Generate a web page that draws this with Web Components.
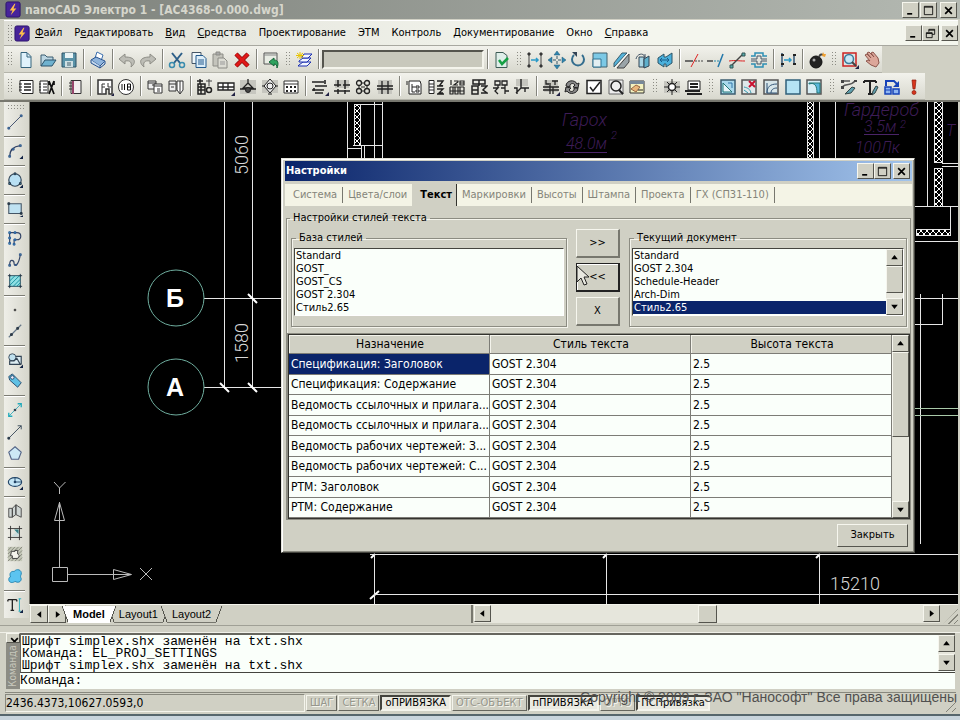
<!DOCTYPE html>
<html lang="ru">
<head>
<meta charset="utf-8">
<title>nanoCAD Электро 1 - [АС4368-0.000.dwg]</title>
<style>
html,body{height:100%}
body{margin:0;overflow:hidden;background:#d0d0c4;color:#000;font:11px/14px "DejaVu Sans Condensed","Liberation Sans",sans-serif}
</style>
</head>
<body>
<cad-app></cad-app>
<script>
const ICONS = {
bolt:'<rect x="1" y="1" width="15" height="16" rx="2" fill="#47239a" stroke="#2a146a"/><path d="M10 3L5 10h3L6 15l6-7H9l2-5z" fill="#ffc04a" stroke="none"/>',
new:'<path d="M4 1.500h6l4 4v11H4z" fill="#dff2fb" stroke="#35647c"/><path d="M10 2v4h4" stroke="#35647c"/>',
open:'<path d="M2 15V4h4l2 2h6v3" fill="#bcd6e2" stroke="#3b5c70"/><path d="M2 15l4-6h11l-4 6z" fill="#6fb2cf" stroke="#2c536a"/>',
save:'<path d="M2 2h14v14H2z" fill="#5a93a8" stroke="#2c5266"/><path d="M5 2h8v5H5z" fill="#e9f4f6" stroke="none"/><path d="M5 10h8v6H5z" fill="#cfe0e4" stroke="none"/><path d="M7 12h4M7 14h4" stroke="#44606c"/>',
print:'<path d="M6 7l2-6 6 3-2 6" fill="#fff" stroke="#3b6fae"/><path d="M2 9l5-3 9 4-5 5z" fill="#8fb4dc" stroke="#27528f"/><path d="M2 9v3l9 5v-2M11 17l5-4v-3" fill="#c4d8ee" stroke="#27528f"/>',
undo:'<path d="M7 3L1 8l6 5v-3c6-1 7 2 6 6 6-5 4-10-6-10z" fill="#bdbdb6" stroke="#8d8d86"/>',
redo:'<path d="M11 3l6 5-6 5v-3c-6-1-7 2-6 6-6-5-4-10 6-10z" fill="#bdbdb6" stroke="#8d8d86"/>',
cut:'<path d="M4 2l8 10M14 2L6 12" stroke="#2d5f88" stroke-width="2"/><circle cx="4" cy="14" r="2.500" stroke="#3a8cae" stroke-width="1.500"/><circle cx="14" cy="14" r="2.500" stroke="#3a8cae" stroke-width="1.500"/>',
copy:'<path d="M2 1.500h9v11H2z" fill="#eef6fa" stroke="#456"/><path d="M6 4.500h7l3 3v9H6z" fill="#dcedf8" stroke="#23598c"/><path d="M8 9h6M8 11h6M8 13h6" stroke="#23598c"/>',
paste:'<path d="M2 3h10v12H2z" fill="#c4c4bc" stroke="#8c8c86"/><path d="M5 1h4v3H5z" fill="#aaa" stroke="#8c8c86"/><path d="M7 7h6l3 3v7H7z" fill="#dcdcd4" stroke="#8c8c86"/><path d="M9 11h5M9 13h5" stroke="#999"/>',
del:'<path d="M3 3l12 12M15 3L3 15" stroke="#8c0d0d" stroke-width="4.500"/><path d="M3 3l12 12M15 3L3 15" stroke="#e01818" stroke-width="3"/>',
import:'<path d="M2 2h13v11H2z" fill="#e8ece4" stroke="#555"/><path d="M2 4h13" stroke="#888"/><path d="M7 11l5-4v2c4 0 5 3 3 8 0-3-1-4-3-4v2z" fill="#2fa35f" stroke="#17683a"/>',
layers:'<path d="M4 14l4-3h8l-4 4H3z" fill="#f2f6ff" stroke="#1b2fb0"/><path d="M4 10l4-3h8l-4 4H4z" fill="#f2f6ff" stroke="#1b2fb0"/><path d="M7 6l2-3h8l-4 4H7z" fill="#f2f6ff" stroke="#1b2fb0"/><path d="M5 1v7M1 4.500h8M2 2l6 5M8 2L2 7" stroke="#e8c400"/>',
pagecheck:'<path d="M3 1.500h7l4 3v12H3z" fill="#dfeee9" stroke="#3c5b55"/><path d="M6 9l3 4 6-6" stroke="#15a044" stroke-width="2.500"/>',
copyobj:'<path d="M3 2v14M15 2v14" stroke="#444"/><path d="M2 4h2v-2h-2zM2 14h2v2h-2zM14 4h2v-2h-2zM14 14h2v2h-2z" fill="#444" stroke="#333"/><path d="M5 9h7M10 7l2 2-2 2" stroke="#2a9ac8" stroke-width="1.500"/>',
move:'<path d="M9 0l3 4H6zM9 18l3-4H6zM0 9l4-3v6zM18 9l-4-3v6z" fill="#2f85ae" stroke="#225a78" stroke-width=".5"/><path d="M9 5v3M9 10v3M5 9h3M10 9h3" stroke="#356"/>',
rotate:'<path d="M13 4a6 6 0 1 1-8 0" stroke="#336d8e" stroke-width="2"/><path d="M3 1h5v5z" fill="#345" stroke="none"/>',
scale:'<path d="M2 2h14v14H2z" fill="#7cc9e6" stroke="#40606e"/><path d="M2 8h8v8H2z" fill="#e3eff2" stroke="#2d7596"/>',
mirror:'<path d="M1 12L9 2h5L1 16z" fill="#55b4db" stroke="#3a5c6c"/><path d="M4 17L16 3v8l-5 6z" fill="#9aa4a8" stroke="#444"/><path d="M2 17L15 2" stroke="#fff"/>',
stretch:'<path d="M2 8c1-5 7-7 9-2M11 3v4H7" stroke="#456"/><path d="M5 6h5v10H5z" fill="#a8d6e6" stroke="#345"/><path d="M10 8l5-3v10l-5 2z" fill="#5fb0cc" stroke="#345"/>',
flip:'<path d="M2 7l6-4v3h2l6-4v10l-6 4v-3H8v3l-6-4z" fill="#4ab0dc" stroke="#2e5566"/><path d="M4 9h9M6 7L4 9l2 2M11 7l2 2-2 2" stroke="#1b5d88"/>',
trim:'<path d="M0 10h8" stroke="#444" stroke-width="1.500"/><path d="M10 10h8" stroke="#444" stroke-dasharray="2 1"/><path d="M6 16L13 3" stroke="#d22"/>',
extend:'<path d="M0 10h6" stroke="#444" stroke-width="1.500"/><path d="M7 10h6" stroke="#28a" stroke-dasharray="2 1"/><path d="M11 16l5-13" stroke="#27a" stroke-width="1.500"/>',
chamfer:'<path d="M1 10c7-1 8 0 16 0" stroke="#d22"/><path d="M3 15L15 3" stroke="#444" stroke-width="1.500"/><path d="M2 14h3v3H2zM14 2h3v3h-3z" fill="#5aa" stroke="#355"/>',
offset:'<path d="M1 5h4V2h8v3h4M1 13h4v3h8v-3h4" stroke="#2c8fb4" stroke-width="1.500"/><path d="M1 8h6V5h4v3h6M1 10h6v3h4v-3h6" stroke="#456"/>',
join:'<path d="M3 2v14M15 3v11" stroke="#357" stroke-width="1.500"/><path d="M2 4h3M2 13h3M14 4h3M14 13h3" stroke="#222" stroke-width="2"/><path d="M5 9h7M10 7l2 2-2 2" stroke="#2a9ac8" stroke-width="1.500"/>',
bomb:'<circle cx="8" cy="11" r="6" fill="#222" stroke="#111"/><circle cx="6" cy="9" r="1.500" fill="#aaa" stroke="none"/><path d="M11 6c1-3 3-3 4-2" stroke="#444" stroke-width="2"/><path d="M15 1l1 2 2 0-1 3-3-1z" fill="#f0a030" stroke="none"/>',
zoomw:'<path d="M2 2h13v13H2z" fill="#dde4e4" stroke="#c22" stroke-width="1.500"/><circle cx="8" cy="8" r="4.500" fill="#c8e8f6" stroke="#3c7c9c" stroke-width="1.500"/><path d="M11 11l4 4" stroke="#444" stroke-width="2"/><path d="M18 14v4h-4z" fill="#224" stroke="none"/>',
hand:'<path d="M3 4l2-1 4 4-4-5 2-1 5 5-3-4 2-1 5 6 1 5-3 4-5-2-5-4 2-1 2 1z" fill="#dca79a" stroke="#8c554c"/>',
list:'<path d="M3 2.500h13v13H5l-2-2z" fill="#fff" stroke="#222"/><path d="M7 6h7M7 9h7M7 12h7" stroke="#222" stroke-width="1.500"/><path d="M2 6h3M2 9h3M2 12h3" stroke="#222"/>',
listx:'<path d="M2 3h8v12H2z" fill="#fff" stroke="#222"/><path d="M5 6h4M5 9h4M5 12h4M1 6h2M1 9h2M1 12h2" stroke="#222"/><path d="M11 3l5 13M16 3l-5 13M11 3v4M16 3v4" stroke="#111" stroke-width="1.700"/>',
door:'<path d="M4 2.500h10v13H4z" fill="#f2efef" stroke="#333"/><path d="M6 3v13" stroke="#96456b" stroke-width="2"/><path d="M2 5h3M2 8h3M2 11h3" stroke="#333"/>',
plan:'<path d="M2 2h14v14h-3v-5h-3v5H2z" fill="#fff" stroke="#333" stroke-width="1.500"/><path d="M6 15V6h3M6 9h3M12 5v4h3" stroke="#333"/><path d="M18 15v3h-3z" fill="#224" stroke="none"/>',
n118:'<circle cx="9" cy="9" r="7.500" fill="#fff" stroke="#333"/><path d="M5 6v6M7.500 6v6M10.500 6h3v6h-3zM10.500 9h3" stroke="#111"/>',
panels:'<path d="M2 3h8v8H2z" fill="#eee" stroke="#333"/><path d="M2 5h8M6 7h2" stroke="#333"/><path d="M8 6h8v9H8z" fill="#fff" stroke="#333"/><path d="M8 8h8M11 11h3M11 13h3" stroke="#333"/>',
panels2:'<path d="M2 3h7v10H2z" fill="#eee" stroke="#333"/><path d="M2 6h7M4 9h3" stroke="#333"/><path d="M10 3h6v9l-3 4-3-4zM13 3v12" fill="#fff" stroke="#333"/>',
dev1:'<path d="M2 6h7v10H2zM2 9h7M2 12h7M5 6v10M1 3h6M4 1v5" stroke="#222" stroke-width="1.500"/><path d="M10 3h6M13 1v7" stroke="#444"/><circle cx="13" cy="12" r="2.500" stroke="#222" stroke-width="1.500"/>',
dev2:'<path d="M1 5h16v7H1zM6 5v7M11 5v7M1 9h16" fill="#fff" stroke="#222" stroke-width="1.300"/><path d="M18 14v4h-4z" fill="#224" stroke="none"/>',
lamp:'<path d="M1 2h16v14H1z" fill="#c6c6bf" stroke="none"/><path d="M9 1v5M9 5l-5 5h10zM1 11h16" stroke="#222" stroke-width="1.300"/><circle cx="9" cy="12" r="2.500" fill="#444" stroke="#222"/>',
lamp2:'<path d="M1 2h16v13H1z" fill="#c6c6bf" stroke="none"/><path d="M9 1l6 7-6 7-6-7zM1 8h3M14 8h3" fill="#eee" stroke="#222"/><circle cx="9" cy="8" r="3" stroke="#222"/><path d="M7 16h4" stroke="#222"/>',
xxx:'<path d="M2 3h14v12H2zM2 6h14" fill="#fff" stroke="#333"/><path d="M4 8l2 2M6 8l-2 2M8 8l2 2M10 8l-2 2M12 8l2 2M14 8l-2 2M4 12l2 2M6 12l-2 2M8 12l2 2M10 12l-2 2M12 12l2 2M14 12l-2 2" stroke="#222"/>',
wires:'<path d="M1 4h12M4 8h12M1 12h12M4 15h8M14 2v4M3 10v3" stroke="#222" stroke-width="1.600"/><path d="M18 14v4h-4z" fill="#224" stroke="none"/>',
brk:'<path d="M2 2h14v8H2z" fill="#c6c6bf" stroke="none"/><path d="M5 2v7M12 2v9M1 7h7M10 7h7M1 13h16M5 11v5M12 12v4" stroke="#222" stroke-width="1.500"/>',
pts:'<g stroke="#222" stroke-width="1.300"><circle cx="5" cy="5" r="2.500"/><circle cx="13" cy="5" r="2.500"/><circle cx="5" cy="13" r="2.500"/><circle cx="13" cy="13" r="2.500"/><path d="M8 5h2M8 13h2M5 8v2M13 8v2M7 9h4" stroke-width="1"/></g>',
node:'<path d="M2 2h14v14H2z" fill="#c6c6bf" stroke="none"/><path d="M1 8h5V3M17 8h-5V3M6 16v-5H1M12 16v-5h5M6 8h6v3H6z" stroke="#222" stroke-width="1.300"/>',
tree:'<path d="M4 3h11l1 3v10H4z" fill="#fff" stroke="#222"/><path d="M7 6v8h3M7 9h3M2 3v4" stroke="#222"/><path d="M11 8h3v2h-3zM11 12h3v2h-3z" stroke="#222"/>',
sch1:'<path d="M2 2.500h5v13H2zM2 6h5M2 9h5M2 12h5" fill="#fff" stroke="#222"/><path d="M10 3h6l-3 4 3 1h-6M10 11h6l-4 4h4M10 16h7" stroke="#222" stroke-width="1.400"/>',
sch2:'<path d="M3 2v5M6 3h4v1L6 7h4M12 3h4v4h-4zM12 5h4M2 9h14M2 9v7h3V9M7 9v7h3V9M12 9v7h4V9M2 13h14" stroke="#222" stroke-width="1.200"/>',
sch3:'<path d="M3 2h12v4H3zM2 8h6v8H2zM2 12h6M9 2v6M11 8h6l-4 4 4 3h-6" stroke="#222" stroke-width="1.500"/>',
sch4:'<path d="M3 3h5v4H3zM10 3h5v4h-5zM1 10h5l-3 3 3 3M9 10h4v6M13 13h4M6 7v3M13 7v3" stroke="#222" stroke-width="1.300"/>',
sch5:'<path d="M3 1h12v7H3z" fill="#c6c6bf" stroke="none"/><path d="M8 1v9l-5 5M8 10h8M4 16v-6H1M12 10v4" stroke="#222" stroke-width="1.400"/>',
gnd:'<path d="M2 2h14v12H2z" fill="#c6c6bf" stroke="none"/><path d="M4 2v4h3M10 3h6M13 3v4M1 9h16M1 12h16M8 5v11M11 9v7" stroke="#222" stroke-width="1.300"/><path d="M18 14v4h-4z" fill="#224" stroke="none"/>',
sync:'<path d="M3 8c0-6 9-7 11-2l2-1-1 5-5-1 2-2c-2-3-6-1-5 2zM15 10c0 6-9 7-11 3l-2 1 1-5 5 1-2 2c2 3 6 1 5-2z" fill="#888" stroke="#222"/>',
chk:'<path d="M2 2.500h14v13H2z" fill="#fff" stroke="#222" stroke-width="1.500"/><path d="M5 9l3 4 7-9" stroke="#222" stroke-width="1.500"/>',
find:'<path d="M2 2h14v14H2z" fill="#eee" stroke="#666"/><circle cx="9" cy="8" r="5" stroke="#222" stroke-width="1.500"/><path d="M12 12l4 4" stroke="#222" stroke-width="2"/>',
note:'<path d="M2 3h14v12H2z" fill="#f4f2c0" stroke="#333"/><path d="M2 3h14v3H2z" fill="#789" stroke="none"/><path d="M3 11l5-4 4 2-4 5z" fill="#e8b77c" stroke="#964"/><path d="M10 12h5" stroke="#222"/>',
target:'<path d="M1 3h16v12H1z" fill="#c6c6bf" stroke="none"/><path d="M9 1v4M9 13v4M1 9h4M13 9h4M4 4l2 2M14 4l-2 2M4 14l2-2M14 14l-2-2" stroke="#222"/><circle cx="9" cy="9" r="3.500" fill="#fff" stroke="#222" stroke-width="1.500"/>',
board:'<path d="M4 3h12v9H4z" fill="#fff" stroke="#222"/><path d="M6 6h8M6 9h8M1 13h15M3 16h15" stroke="#222" stroke-width="1.800"/>',
v1:'<path d="M2 2h14v14H2z" fill="#a9d9ec" stroke="#3b5e70" stroke-width="1.500"/><path d="M4 5l9 9H4z" fill="#e8f6fb" stroke="#277"/><path d="M9 5h4v5" stroke="#37a"/>',
v2:'<path d="M2 2h14v14H2z" fill="#dfe8ea" stroke="#555" stroke-width="1.500"/><path d="M4 9c4 1 6 2 7 6M4 12l4 3" stroke="#39a"/><path d="M9 3l6 6M15 3L9 9" stroke="#c8102e" stroke-width="2"/>',
v3:'<path d="M2 2h14v14H2z" fill="#d7e6ea" stroke="#555" stroke-width="1.500"/><path d="M5 15c0-6 3-9 10-9M9 15c0-3 2-5 6-5M5 5v10h10" stroke="#357"/>',
v4:'<path d="M2 2h14v14H2z" fill="#b5e3f4" stroke="#30607a" stroke-width="1.500"/>',
v5:'<path d="M2 2h14v14H2z" fill="#d7eef6" stroke="#555" stroke-width="1.500"/><path d="M4 6c6-2 8 2 8 9h3V5H4z" fill="#5ab8dc" stroke="#277"/>',
d1:'<path d="M2 3h8M2 9c5-5 8 0 13-6" stroke="#555" stroke-width="1.500"/><path d="M1 2h3v3H1zM14 2h3v2h-3zM1 8h3v3H1z" fill="#444" stroke="none"/><path d="M12 9l3 1-4 5-6 1 4-4z" fill="#5f9fae" stroke="#344"/>',
d2:'<path d="M2 3h12M2 3v2M14 3v2M8 3v13M6 16h4" stroke="#222" stroke-width="2"/><path d="M14 8l2 1-3 6-3 2 1-4z" fill="#5f9fae" stroke="#344"/>',
d3:'<path d="M3 8V3h8l4 4" stroke="#1642b8" stroke-width="2"/><path d="M16 3v6h-6z" fill="#1642b8" stroke="none"/><path d="M2 9h6v7H2zM10 11h6v5h-6z" fill="#8fb5f2" stroke="#1642b8" stroke-width="1.500"/><path d="M2 12h6" stroke="#1642b8"/>',
ex:'<path d="M7 2h4l-1 9H8z" fill="#d8351c" stroke="#8c1a0c" stroke-width=".7"/><circle cx="9" cy="14.500" r="2" fill="#d8351c" stroke="#8c1a0c" stroke-width=".7"/>',
l_line:'<path d="M2 16L16 2" stroke="#346"/><path d="M1 15h2v2H1zM15 1h2v2h-2z" fill="#48a" stroke="#358"/>',
l_arc:'<path d="M3 15c0-7 4-11 12-12" stroke="#346" stroke-width="1.300"/><path d="M2 14h2v2H2zM6 6h2v2H6zM14 2h2v2h-2z" fill="#48a" stroke="#358"/><path d="M18 14v4h-4z" fill="#124" stroke="none"/>',
l_circ:'<circle cx="9" cy="9" r="7" fill="#b9e0f3" stroke="#345" stroke-width="1.300"/><path d="M8 1h2v2H8zM2 12h2v2H2zM14 12h2v2h-2z" fill="#48a" stroke="#234"/><path d="M18 14v4h-4z" fill="#124" stroke="none"/>',
l_rect:'<path d="M2 3h14v11H2z" fill="#bfe2f2" stroke="#456" stroke-width="1.200"/><path d="M1 2h2v2H1zM15 13h2v2h-2z" fill="#345" stroke="#234"/><path d="M18 16v2h-4z" fill="#124" stroke="none"/>',
l_poly:'<path d="M3 15V3h8c6 0 6 8 0 8H8v5" stroke="#346" stroke-width="1.300"/><path d="M2 2h2v2H2zM8 2h2v2H8zM2 8h2v2H2zM2 14h2v2H2zM8 10h2v2H8zM7 15h2v2H7z" fill="#5ab" stroke="#259"/>',
l_spl:'<path d="M3 15c0-8 5-6 5-2s5 3 7-10" stroke="#346" stroke-width="1.300"/><path d="M2 14h2v2H2zM9 14h2v1H9zM14 2h2v2h-2z" fill="#48a" stroke="#358"/>',
l_hat:'<path d="M3 3h12v12H3z" fill="#8fe0e4" stroke="#245"/><path d="M3 9l6-6M3 14L14 3M7 15l8-8M11 15l4-4" stroke="#189"/><path d="M1 3h3M14 3h3M3 1v3M15 1v3M1 15h3M14 15h3M3 14v3M15 14v3" stroke="#234"/>',
l_pt:'<path d="M8 8h2v2H8z" fill="#555" stroke="#333" stroke-width=".5"/>',
l_seg:'<path d="M2 16L16 2" stroke="#678" stroke-width="1.300"/><path d="M4 12h2v2H4zM11 5h2v2h-2z" fill="#444" stroke="#234"/>',
l_reg:'<circle cx="6" cy="6" r="4" fill="#bfe0ee" stroke="#345"/><path d="M10 5h6v9M8 10l3-3 4 7H3v-4z" fill="#dcecf2" stroke="#345" stroke-width="1.300"/><path d="M18 14v4h-4z" fill="#124" stroke="none"/>',
l_tag:'<path d="M2 4l4-3 10 10-4 5L3 8z" fill="#5fc0e4" stroke="#246"/><circle cx="6" cy="5" r="2" fill="#eef" stroke="#246"/>',
l_ray:'<path d="M2 16L16 2" stroke="#3ab"/><path d="M12 2h4v4M2 12v4h4" stroke="#2ab" stroke-width="1.500"/><circle cx="9" cy="9" r="1.500" fill="#345" stroke="none"/>',
l_ray2:'<path d="M2 16L16 2M12 2h4v4" stroke="#345"/><path d="M1 15h2v2H1z" fill="#345" stroke="#234"/>',
l_pent:'<path d="M9 2l7 6-3 8H5L2 8z" fill="#cde9f6" stroke="#568" stroke-width="1.300"/>',
l_ell:'<ellipse cx="9" cy="9" rx="7.500" ry="5" fill="#c4e6f6" stroke="#246" stroke-width="1.300"/><path d="M9 9h7M9 9V4" stroke="#246"/><circle cx="9" cy="9" r="1.500" fill="#246" stroke="none"/><path d="M18 14v4h-4z" fill="#124" stroke="none"/>',
l_bk:'<path d="M2 6h4v10H2zM6 6l4-4v11l-4 3zM10 2l6 4v10l-6-3z" fill="#cfd6d4" stroke="#444"/>',
l_fr:'<path d="M4 1v16M14 1v16M1 4h16M1 14h16" stroke="#333"/><path d="M5 13L13 5v8z" fill="#cdd" stroke="none"/><path d="M8 5h5v5z" fill="#357f86" stroke="none"/>',
l_cl:'<path d="M1 1h16v16H1z" fill="#c4c8b8" stroke="none"/><path d="M1 5l4-4M1 9l8-8M1 13L13 1M1 17L17 1M5 17L17 5M9 17l8-8M13 17l4-4" stroke="#84847c"/><path d="M5 6h4v-1h3v4l2 2-2 3H6v-3H4z" fill="#f4f4ec" stroke="#333"/>',
l_rev:'<path d="M8 4c3-4 9-2 8 3-1 2-1 3 0 5 0 4-4 5-7 3-2 2-7 2-7-2 0-2 1-3 2-3-2-4 1-7 4-6z" fill="#5cc4f0" stroke="#1b7fae"/>',
l_txt:'<path d="M1 3h10M1 3v2M11 3v2M6 3v12M4 15h4" stroke="#222" stroke-width="1.500"/><path d="M14 2v14M13 2h3M13 16h3" stroke="#2ab"/><path d="M18 14v4h-4z" fill="#124" stroke="none"/>',
min:'<path d="M5 13h6" stroke="#000" stroke-width="2"/>',
max:'<path d="M4 4h10v10H4zM4 5h10" stroke="#000"/>',
rest:'<path d="M7 4h7v6h-3M7 5h7M7 4v3M4 8h7v6H4zM4 9h7" stroke="#000"/>',
close:'<path d="M5 5l8 8M13 5l-8 8" stroke="#000" stroke-width="2"/>',
up:'<path d="M9 6l4 5H5z" fill="#000" stroke="none"/>',
down:'<path d="M9 12l4-5H5z" fill="#000" stroke="none"/>',
left:'<path d="M6 9l5-4v8z" fill="#000" stroke="none"/>',
right:'<path d="M12 9L7 5v8z" fill="#000" stroke="none"/>'
};
const NAMES = {new:'Создать',open:'Открыть',save:'Сохранить',print:'Печать',undo:'Отменить',redo:'Повторить',cut:'Вырезать',copy:'Копировать',paste:'Вставить',del:'Удалить',min:'Свернуть',max:'Развернуть',rest:'Восстановить',close:'Закрыть',up:'Вверх',down:'Вниз',left:'Влево',right:'Вправо'};
const CONTROL = `*{box-sizing:border-box}
button,input,select,textarea{font:inherit;color:inherit;margin:0;padding:0;border:0;border-radius:0;background:none;outline:0}
.raised{background:#d0d0c4;border:1px solid;border-color:#f6f6ee #55554e #55554e #f6f6ee}`;

class Base extends HTMLElement {
  constructor(){ super(); this.attachShadow({mode:'open'}); }
  connectedCallback(){ this.shadowRoot.innerHTML = `<style>${CONTROL}${this.css()}</style>${this.html()}`; }
  at(n,d=''){ return this.getAttribute(n) ?? d; }
}
const def = (n,c) => customElements.define(n,c);

def('ui-icon', class extends Base {
  css(){ return `:host{display:block;width:18px;height:18px;flex:none}svg{display:block;width:100%;height:100%}`; }
  html(){ return `<svg viewBox="0 0 18 18" fill="none" stroke="#222" aria-hidden="true">${ICONS[this.at('name')]||''}</svg>`; }
});

def('box-button', class extends Base {
  css(){ return `:host{display:flex;width:17px;height:16px;flex:none}
  button{flex:1;display:grid;place-items:center;overflow:hidden;min-width:0}
  ui-icon{width:15px;height:15px}`; }
  html(){ const n=this.at('name'); return `<button class="raised" aria-label="${NAMES[n]||n}"><ui-icon name="${n}"></ui-icon></button>`; }
});

def('tool-bar', class extends Base {
  css(){ const v=this.hasAttribute('vertical'); return v ? `
  :host{display:flex;flex-direction:column;width:25px;background:linear-gradient(90deg,#eeeee8,#d6d6cc);align-self:flex-start;padding-bottom:2px}
  .grip{height:5px;margin:2px 3px;background:radial-gradient(#8c8c84 1px,transparent 1px) 0 0/3px 3px;}
  .g{display:flex;flex-direction:column;height:var(--s)}
  .sep{height:7px;display:grid;align-items:center}.sep::after{content:"";border-top:1px solid #7c7c74;border-bottom:1px solid #fff;margin:0 4px 0 0}
  button{flex:1;display:grid;place-items:center;padding-right:3px}
  ui-icon{width:16px;height:16px}` : `
  :host{display:flex;height:27px;background:linear-gradient(#f2f2ec,#d8d8ce);border-bottom:1px solid #b4b4aa;flex:none;padding-top:2px}
  .grip{width:5px;margin:3px 3px 5px;background:radial-gradient(#8c8c84 1px,transparent 1px) 0 0/3px 3px;flex:none}
  :host([wide]) .grip{margin-left:4px;margin-right:4px}
  .g{display:flex;width:var(--s)}
  .sep{width:7px;display:grid;justify-items:center}.sep::after{content:"";border-left:1px solid #84847c;border-right:1px solid #fff;margin:1px 0 3px}
  button{flex:1;display:grid;place-items:center;min-width:0}
  .field{width:162px;margin:2px 0 3px;display:flex}
  .field input{width:100%;background:#c8c8bc;border:2px solid;border-color:#55554e #f4f4ec #f4f4ec #55554e}`; }
  html(){
    const sizes=[0,22,43,65,87,108,130,152];
    return '<div class="grip"></div>'+this.at('icons').split('|').map(part=>{
      const names=part.trim().split(/\s+/);
      if(names[0]==='FIELD') return `<span class="field"><input aria-label="Слой"></span>`;
      return `<div class="g" style="--s:${sizes[names.length]}px">${names.map(n=>`<button aria-label="${NAMES[n]||n}"><ui-icon name="${n}"></ui-icon></button>`).join('')}</div>`;
    }).join('<i class="sep"></i>');
  }
});

def('scroll-strip', class extends Base {
  css(){ const v=this.hasAttribute('vertical'); return `
  :host{display:flex;flex-direction:${v?'column':'row'};${v?'width:17px':'height:18px'};background:#e6e6dc;flex:none;min-width:0;min-height:0}
  box-button{width:17px;height:17px}
  i{display:block}.thumb{flex:${this.at('size',0)} 1 0;min-width:17px;min-height:0}
  .a{flex:${this.at('before',0)} 1 0}.b{flex:${this.at('after',1)} 1 0}`; }
  html(){ const v=this.hasAttribute('vertical'); return `<box-button name="${v?'up':'left'}"></box-button><i class="a"></i>${this.at('size')?'<i class="thumb raised"></i>':''}<i class="b"></i><box-button name="${v?'down':'right'}"></box-button>`; }
});

def('style-list', class extends Base {
  css(){ return `:host{display:block;min-width:0;padding-top:2px}
  fieldset{border:1px solid #8c8c82;box-shadow:1px 1px 0 #f4f4ec,inset 1px 1px 0 #f4f4ec;margin:0;padding:3px 2px 10px 2px;min-width:0}
  legend{padding:0 3px;margin-left:2px;line-height:14px}
  div{display:flex;border:1px solid;border-color:#44443e #fff #fff #44443e;background:#fafffa;height:68px}
  select{flex:1;min-width:0;overflow:hidden;height:66px;appearance:none}
  option{padding:0 0 0 1px;line-height:13px;min-height:13px;height:13px;color:#000}
  option:checked{background:#0a246a linear-gradient(#0a246a,#0a246a);color:#fff}`; }
  html(){ const sel=this.at('selected'); return `<fieldset><legend>${this.at('label')}</legend><div><select size="5" aria-label="${this.at('label')}">${this.at('items').split('|').map(t=>`<option${t===sel?' selected':''}>${t}</option>`).join('')}</select>${sel?'<scroll-strip vertical before="0" size="27" after="5"></scroll-strip>':''}</div></fieldset>`; }
});

def('settings-table', class extends Base {
  css(){ return `:host{display:flex;border:1px solid #33332e;outline:1px solid #8c8c82;background:#fafffa;font-size:12px}
  div{flex:1;min-width:0}
  table{width:100%;border-collapse:separate;border-spacing:0;table-layout:fixed;height:183px}
  th,td{border-right:1px solid #7c7c76;border-bottom:1px solid #7c7c76;padding:0 0 0 2px;text-align:left;font-weight:400;white-space:nowrap;overflow:hidden;line-height:16px}
  th{background:#d0d0c4;text-align:center;font-size:12px;height:19px;box-shadow:inset 1px 1px 0 #f4f4ec}
  .sel{background:#0a246a;color:#fff}`; }
  html(){ const rows=['Спецификация: Заголовок','Спецификация: Содержание','Ведомость ссылочных и прилага...','Ведомость ссылочных и прилага...','Ведомость рабочих чертежей: З...','Ведомость рабочих чертежей: С...','РТМ: Заголовок','РТМ: Содержание'];
  return `<div><table><thead><tr><th scope="col">Назначение</th><th scope="col">Стиль текста</th><th scope="col">Высота текста</th></tr></thead><tbody>${rows.map((r,i)=>`<tr><td${i?'':' class="sel"'}>${r}</td><td>GOST 2.304</td><td>2.5</td></tr>`).join('')}</tbody></table></div><scroll-strip vertical before="0" size="85" after="65"></scroll-strip>`; }
});

def('settings-dialog', class extends Base {
  css(){ return `:host{display:block;background:#d0d0c4;border:1px solid;border-color:#e4e4dc #44443e #44443e #e4e4dc;box-shadow:inset 1px 1px 0 #fff,inset -1px -1px 0 #88887e;padding:2px 2px 5px 3px}
  header{display:flex;align-items:center;height:20px;background:linear-gradient(90deg,#0a246a,#a2c4ec);color:#fff;font-weight:700;font-size:11px;padding:0 2px 0 1px}
  header span{flex:1}header box-button:last-child{margin-left:2px}
  nav{display:flex;background:#f4f4e6;margin:3px 0 5px;height:22px;align-items:center;padding-left:1px}
  nav button{color:#84847a;height:16px;line-height:16px;padding:0 5px;border-right:1px solid #77776e;white-space:nowrap}
  nav button:first-child{padding-left:7px}
  nav button:nth-child(2){border-right:0}
  nav button.on{background:#d0d0c4;color:#000;font-weight:700;height:22px;border-right:1px solid #33332e;padding:0 4px 0 8px}
  .main{border:1px solid #8c8c82;box-shadow:inset 1px 1px 0 #f4f4ec;margin:0 1px;padding:4px 0 0 1px;min-width:0}
  .main>legend{margin-left:2px;padding:0 3px;font-size:11px}
  .row{display:grid;grid-template-columns:275fr 44px 277fr;gap:9px;padding:0 3px 0 3px;margin-bottom:7px}
  .mid{display:flex;flex-direction:column;gap:5px}
  .mid button{height:29px;border-right-width:2px;border-bottom-width:2px;border-right-color:#77776e;border-bottom-color:#77776e}
  .mid button.def{border:1px solid #222;border-right-width:2px;border-bottom-width:2px;box-shadow:inset 1px 1px 0 #fff}
  footer{display:flex;justify-content:flex-end;padding:4px 4px 0}
  footer button{width:71px;height:23px;padding-bottom:2px}`; }
  html(){ const tabs=['Система','Цвета/слои','Текст','Маркировки','Высоты','Штампа','Проекта','ГХ (СП31-110)'];
  return `<header><span>Настройки</span><box-button name="min"></box-button><box-button name="max"></box-button><box-button name="close"></box-button></header>
  <nav role="tablist">${tabs.map(t=>`<button role="tab" aria-selected="${t==='Текст'}"${t==='Текст'?' class="on"':''}>${t}</button>`).join('')}</nav>
  <fieldset class="main"><legend>Настройки стилей текста</legend>
  <div class="row"><style-list label="База стилей" items="Standard|GOST_|GOST_CS|GOST 2.304|Стиль2.65"></style-list>
  <div class="mid"><button class="raised">&gt;&gt;</button><button class="raised def">&lt;&lt;</button><button class="raised">X</button></div>
  <style-list label="Текущий документ" items="Standard|GOST 2.304|Schedule-Header|Arch-Dim|Стиль2.65" selected="Стиль2.65"></style-list></div>
  <settings-table></settings-table></fieldset>
  <footer><button class="raised">Закрыть</button></footer>`; }
});

def('cad-drawing', class extends Base {
  css(){ return `:host{display:block;background:#000}svg{display:block;width:100%;height:100%}
  text{fill:#d8d8d8;stroke:none;font-family:"Roboto","Liberation Sans",sans-serif;font-weight:300;font-size:18px}
  .m{fill:#3d1c56;font-style:italic}.n{font-size:16px}.s{font-size:11px}.b{font:700 25px "Liberation Sans",sans-serif;fill:#fff;text-anchor:middle}`; }
  html(){ return `<svg fill="none" stroke="#e6e6e6" shape-rendering="crispEdges" role="img" aria-label="Чертёж"><defs>
  <pattern id="x" width="6" height="6" patternUnits="userSpaceOnUse"><path d="M0 0l6 6M6 0L0 6" stroke="#fff"/></pattern></defs>
  <g transform="translate(-30 -102)">
  <path d="M224.500 100v289M252.500 100v289M204 298.500h78M204 387.500h78"/>
  <g shape-rendering="auto"><circle cx="176" cy="298" r="28" stroke="#6fae9f"/><circle cx="176" cy="387" r="28" stroke="#6fae9f"/>
  <path d="M248 294l9 9M248 383l9 9M220 383l9 9M370 599l9-8M371 558l4-4M603 558l4-4M816 558l4-4" stroke="#fff" stroke-width="2"/></g>
  <text class="b" x="175" y="307">Б</text><text class="b" x="175" y="396">А</text>
  <text transform="rotate(-90 248 175)" x="248" y="175">5060</text><text transform="rotate(-90 248 363)" x="248" y="363">1580</text>
  <path d="M347.500 101v58M382.500 101v58M374.500 101v58M354 104.500h28M353 145.500h29M348 148.500h14M361.500 145v14M364.500 145v14"/><path d="M354 104h6v41h-6z" fill="url(#x)"/>
  <path d="M807 101h6v58h-6zM934 101h8v61h-8zM934 168h8v38h-8zM916 229h34v6h-34z" fill="url(#x)"/>
  <path d="M819.500 101v58M835.500 101v58M927.500 101v105M942 163.500h16M942 166.500h16M914 206.500h44M950.500 206v29M914 241.500h44M914 298.500h44M942.500 294v31M914 324.500h29M920.500 294v250" /><path d="M914 408.500h44M914 415.500h44" stroke="#a8c8a8"/>
  <text class="m" x="562" y="126">Гарох</text><text class="m n" x="566" y="149">48.0м</text><text class="m s" x="611" y="139">2</text>
  <text class="m" x="844" y="116">Гардероб</text><text class="m n" x="864" y="132">3.5м</text><text class="m s" x="900" y="128">2</text><text class="m n" x="855" y="153">100Лк</text><text class="m n" x="946" y="136">Т</text>
  <path d="M564 152.500h43M864 134.500h35" stroke="#4a2468"/>
  <path d="M374.500 554v50M606.500 554v50M819.500 554v50M370 554.500h588M374 594.500h584"/>
  <text x="830" y="590">15210</text>
  <g shape-rendering="auto" stroke="#bbb"><path d="M52.500 567.500h15v14h-15zM59.500 567v-65M67 574.500h64M54.500 520.500l5-18 5 18zM113.500 569.500l18 5-18 5zM54 482l5.500 6 6-6M59.500 488v6M140 568l12 12M152 568l-12 12"/></g>
  </g></svg>`; }
});

def('layout-tabs', class extends Base {
  css(){ return `:host{display:flex;height:21px;align-items:flex-start;padding-left:1px;border-top:1px solid #f4f4ec;font:11px/16px "Liberation Sans",sans-serif}
  box-button{width:18px;height:18px}
  .t{display:flex;margin-left:2px;padding-top:1px}
  button{height:17px;padding:0 5px;border-bottom:1px solid #77776e;position:relative;background:#d0d0c4;margin-right:4px}
  button::before,button::after{content:"";position:absolute;top:0;bottom:0;width:6px}
  button::before{left:-6px;background:linear-gradient(to top right,transparent 46%,#55554e 47%,#55554e 54%,var(--f,#d0d0c4) 55%)}
  button::after{right:-6px;background:linear-gradient(to top left,transparent 46%,#55554e 47%,#55554e 54%,var(--f,#d0d0c4) 55%)}
  .on{background:#fff;--f:#fff;font-weight:700;z-index:1;border-bottom-color:#fff}
  .gap{width:253px;height:18px;margin-right:1px;border-right:2px solid #77776e}
  scroll-strip{flex:1}
  .end{width:18px;height:19px;background:repeating-linear-gradient(135deg,transparent 0 3px,#84847a 3px 4px);clip-path:polygon(100% 20%,100% 100%,20% 100%)}`; }
  html(){ return `<box-button name="left"></box-button><box-button name="right"></box-button><div class="t" role="tablist"><button class="on" role="tab" aria-selected="true">Model</button><button role="tab">Layout1</button><button role="tab">Layout2</button></div><i class="gap"></i><scroll-strip before="207" size="17" after="206"></scroll-strip><i class="end"></i>`; }
});

def('command-panel', class extends Base {
  css(){ return `:host{display:flex;height:56px;padding-left:6px;padding-right:5px}
  aside{width:14px;display:flex;flex-direction:column;background:#8c8c84;overflow:hidden}
  aside box-button{width:14px;height:10px}
  aside span{writing-mode:vertical-rl;transform:rotate(180deg);color:#c8c8bc;font-size:10px;line-height:14px;text-align:center;height:46px}
  .in{flex:1;display:flex;flex-direction:column;border-top:2px solid #66665e;background:#fafffa;font:13px/12px "Liberation Mono",monospace;min-width:0}
  .hist{display:flex;border-left:1px solid #66665e;border-bottom:1px solid #44443e;height:38px}
  textarea{flex:1;resize:none;overflow:hidden;white-space:pre;padding:1px 0 0 1px}
  scroll-strip{height:36px}
  label{display:flex;line-height:15px}input{flex:1;line-height:15px}`; }
  html(){ return `<aside><box-button name="close"></box-button><span>Команда</span></aside><div class="in"><div class="hist"><textarea readonly aria-label="Журнал команд">Шрифт simplex.shx заменён на txt.shx
Команда: EL_PROJ_SETTINGS
Шрифт simplex.shx заменён на txt.shx</textarea><scroll-strip vertical></scroll-strip></div><label>Команда:<input></label></div>`; }
});

def('status-bar', class extends Base {
  css(){ return `:host{display:flex;align-items:center;height:20px;margin:3px 4px 0 5px;border-top:1px solid #88887e;gap:1px;position:relative}
  output{width:300px;font-size:12px;line-height:16px;border:1px solid;border-color:#88887e #f4f4ec #f4f4ec #88887e}
  button{height:16px;line-height:13px;padding:0 3px;white-space:nowrap;color:#96968c;text-shadow:1px 1px 0 #f4f4ec;border:1px solid;border-color:#f4f4ec #66665e #66665e #f4f4ec}
  button.on{color:#000;text-shadow:none;background:#eaeae2;border:2px solid;border-color:#44443e #f4f4ec #f4f4ec #44443e;padding:0 3px;line-height:12px}
  p{position:absolute;right:-1px;top:-5px;margin:0;font:14px/18px "Liberation Sans",sans-serif;color:#505050;white-space:nowrap}
  .end{margin-left:auto;align-self:flex-end;width:14px;height:12px;background:repeating-linear-gradient(135deg,transparent 0 3px,#84847a 3px 4px);clip-path:polygon(100% 0,100% 100%,0 100%)}`; }
  html(){ return `<output>2436.4373,10627.0593,0</output>${[['ШАГ'],['СЕТКА'],['оПРИВЯЗКА',1],['ОТС-ОБЪЕКТ'],['пПРИВЯЗКА',1],['ОРТО'],['ПСПривязка',1]].map(([t,o])=>`<button${o?' class="on"':''} aria-pressed="${!!o}">${t}</button>`).join('')}<i class="end"></i><p>Copyright © 2009 г. ЗАО "Нанософт" Все права защищены</p>`; }
});

def('cad-app', class extends Base {
  css(){ return `:host{display:flex;flex-direction:column;height:100vh;background:#d0d0c4}
  header{display:flex;align-items:center;height:19px;background:linear-gradient(90deg,#7c807a,#b4b9b2);color:#d6d6cc;font-weight:700;font-size:12px;padding:0 3px 0 5px;gap:1px;flex:none}
  header span{flex:1;padding-left:2px}header ui-icon,.menu ui-icon{width:17px;height:17px}
  header box-button:last-child,.menu box-button:last-child{margin-left:2px}
  .menu{display:flex;align-items:center;height:26px;margin:1px 2px 0 4px;background:linear-gradient(90deg,#deded6,#f4f6ee 60%);border-bottom:1px solid #a8a8a0;border-top:1px solid #fff;flex:none}
  .menu .grip{width:5px;height:18px;margin:0 2px 0 3px;background:radial-gradient(#8c8c84 1px,transparent 1px) 0 0/3px 3px}
  .menu nav{flex:1;display:flex;gap:12px;padding-left:4px}
  .menu nav button{white-space:nowrap}
  .bars{display:flex;padding-left:4px;height:27px;flex:none}
  .work{flex:1;display:flex;min-height:0;border-top:2px solid #77776e;padding:0 2px 0 4px}
  .right{flex:1;display:flex;flex-direction:column;min-width:0}
  .stage{flex:1;position:relative;min-height:0;border-left:1px solid #77776e}
  cad-drawing{position:absolute;inset:0}
  settings-dialog{position:absolute;left:251px;top:56px;width:634px}
  .cursor{position:absolute;left:546px;top:163px;width:14px;height:22px;pointer-events:none}
  .split{height:8px;border-top:1px solid #a0a096;border-bottom:1px solid #f0f0e8;flex:none}
  command-panel,status-bar{flex:none}
  .foot{height:6px;flex:none;background:#c8d4dc;border-top:2px solid #56666c;margin-top:2px}`; }
  html(){ const menu=['<u>Ф</u>айл','Р<u>е</u>дактировать','<u>В</u>ид','<u>С</u>редства','Проектирование','ЭТМ','Контроль','Документирование','Окно','<u>С</u>правка'];
  return `<header><ui-icon name="bolt"></ui-icon><span>nanoCAD Электро 1 - [АС4368-0.000.dwg]</span><box-button name="min"></box-button><box-button name="max"></box-button><box-button name="close"></box-button></header>
  <div class="menu"><i class="grip"></i><ui-icon name="bolt"></ui-icon><nav>${menu.map(m=>`<button>${m}</button>`).join('')}</nav><box-button name="min"></box-button><box-button name="rest"></box-button><box-button name="close"></box-button></div>
  <div class="bars"><tool-bar icons="new open save|print|undo redo|cut copy paste del|import"></tool-bar><tool-bar icons="layers|FIELD|pagecheck"></tool-bar><tool-bar icons="copyobj move rotate scale mirror stretch flip|trim extend chamfer offset|join|bomb"></tool-bar><tool-bar icons="zoomw hand"></tool-bar></div>
  <div class="bars"><tool-bar icons="list listx|door|plan n118|panels panels2|dev1 dev2 lamp lamp2 xxx|wires brk pts node|tree sch1 sch2 sch3 sch4 sch5|gnd sync chk find note"></tool-bar><tool-bar wide icons="target board"></tool-bar><tool-bar wide icons="v1 v2 v3 v4 v5"></tool-bar><tool-bar wide icons="d1 d2 d3 ex"></tool-bar></div>
  <div class="work"><tool-bar vertical icons="l_line|l_arc|l_circ|l_rect|l_poly l_spl l_hat|l_pt l_seg|l_reg l_tag|l_ray l_ray2 l_pent|l_ell|l_bk l_fr l_cl l_rev|l_txt"></tool-bar>
  <div class="right"><div class="stage"><cad-drawing></cad-drawing><settings-dialog></settings-dialog><svg class="cursor" viewBox="0 0 14 22"><path d="M1 1v16l4-4 3 7 3-1-3-7h5z" fill="#e8e8e0" stroke="#222"/></svg></div><layout-tabs></layout-tabs></div></div>
  <div class="split"></div><command-panel></command-panel><status-bar></status-bar><div class="foot"></div>`; }
});
</script>
</body>
</html>
